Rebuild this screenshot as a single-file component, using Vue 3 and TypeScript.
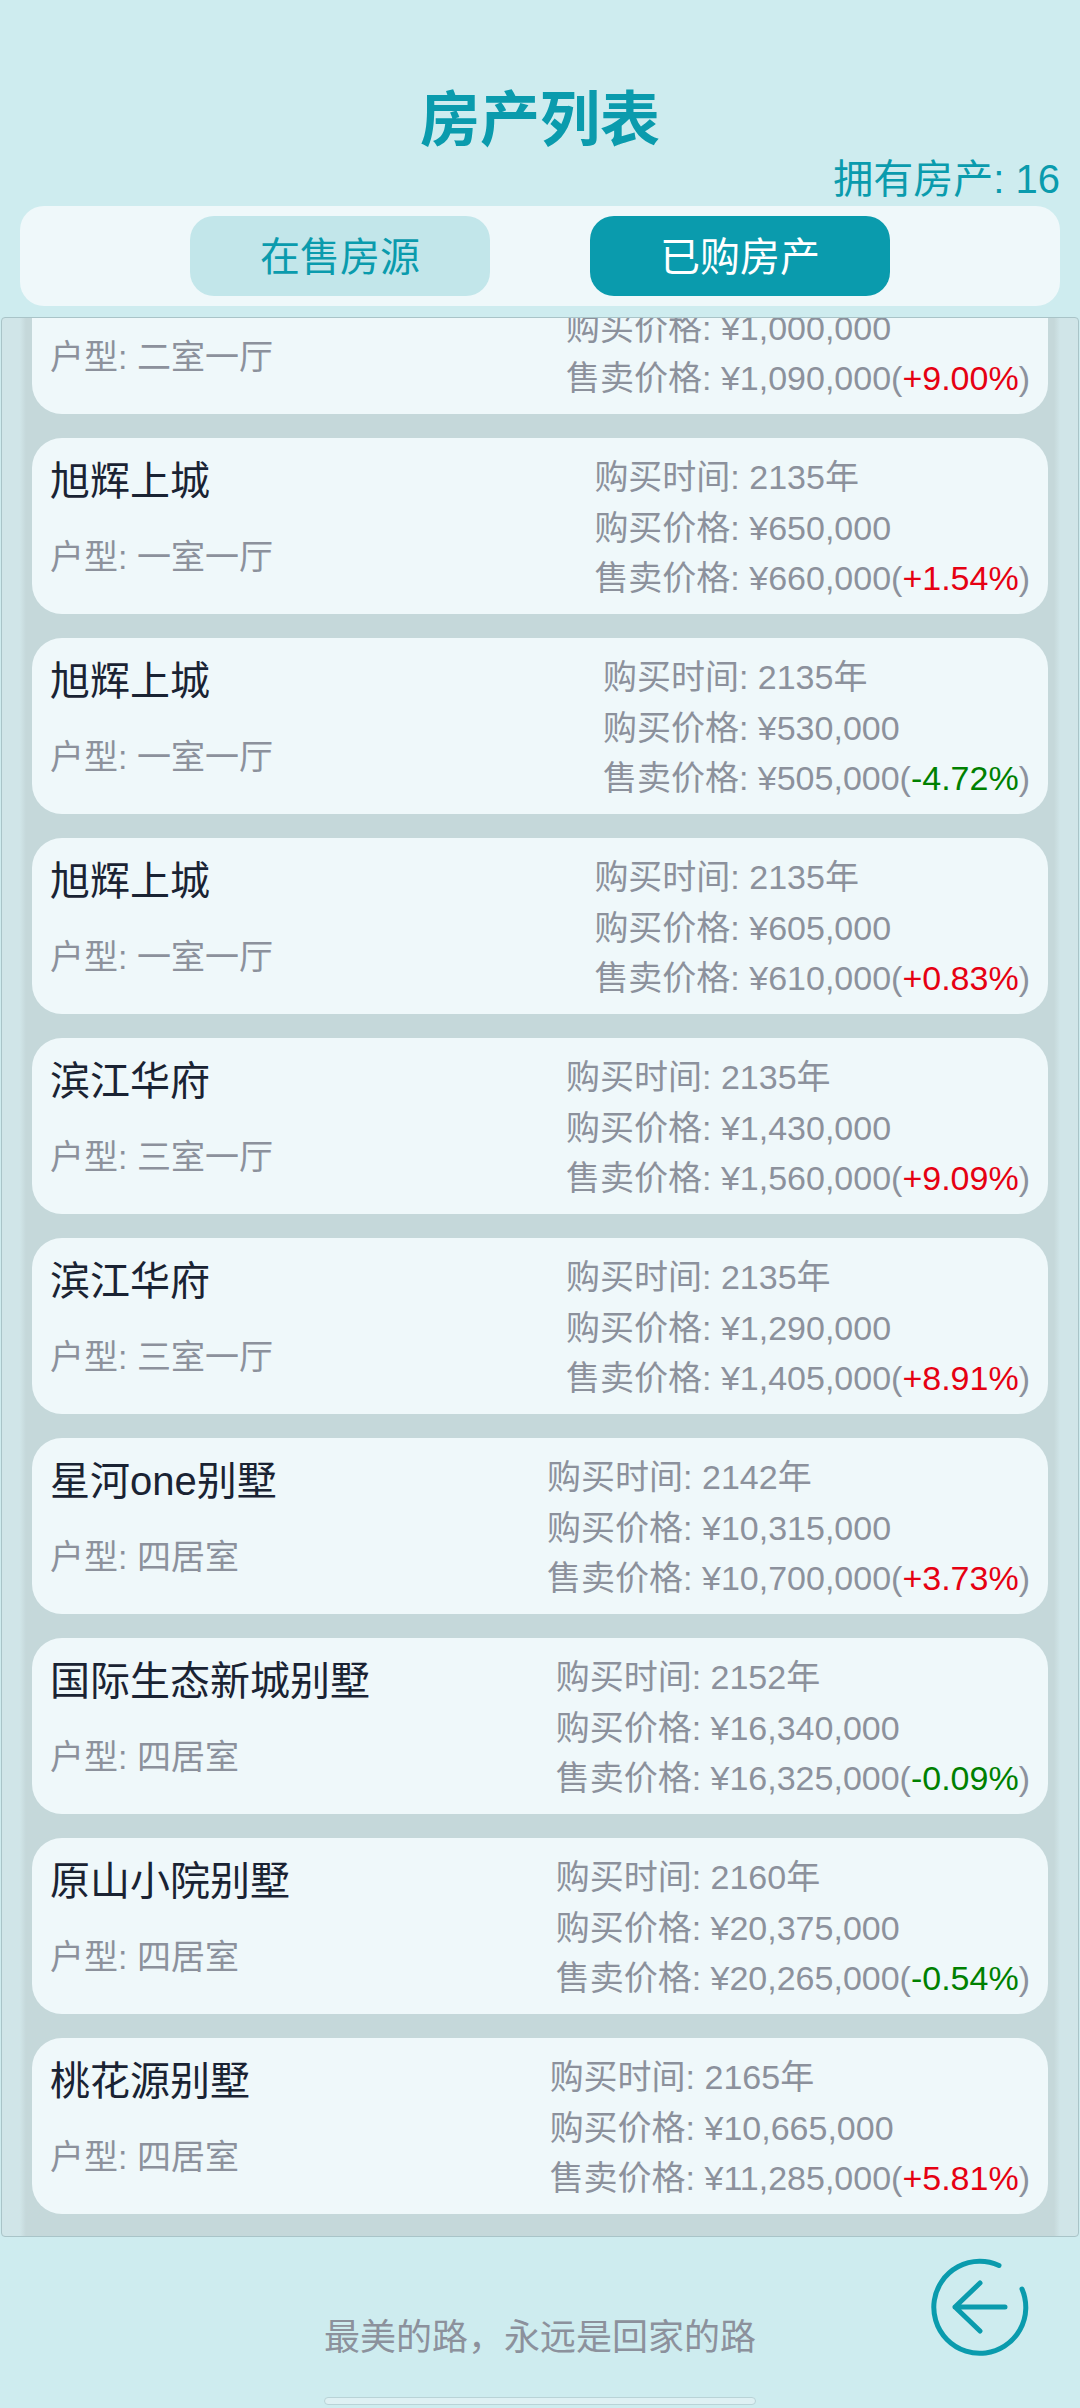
<template>
  <div class="page">
    <header class="head">
      <h1 class="title">房产列表</h1>
      <div class="count">拥有房产: {{ houses.length + 6 }}</div>
      <div class="tabs">
        <button class="tab">在售房源</button>
        <button class="tab active">已购房产</button>
      </div>
    </header>

    <div ref="listEl" class="list">
      <div v-for="(h, i) in houses" :key="i" class="card">
        <div class="left">
          <div class="name">{{ h.name }}</div>
          <div class="type">户型: {{ h.type }}</div>
        </div>
        <div class="right">
          <div>购买时间: {{ h.year }}年</div>
          <div>购买价格: ¥{{ fmt(h.buy) }}</div>
          <div>售卖价格: ¥{{ fmt(h.sell) }}(<span :class="h.rate[0] === '+' ? 'up' : 'down'">{{ h.rate }}</span>)</div>
        </div>
      </div>
    </div>

    <footer class="foot">
      <div class="slogan">最美的路，永远是回家的路</div>
      <svg class="back" viewBox="0 0 100 100" fill="none" stroke="#0a9bad" stroke-linecap="round" stroke-linejoin="round">
        <path d="M69 8.5A46 46 0 1 0 92 32" stroke-width="5" />
        <path d="M75 50H25M50 26L25 50L50 74" stroke-width="5" />
      </svg>
      <div class="indicator"></div>
    </footer>
  </div>
</template>

<script setup lang="ts">
import { onMounted, ref } from "vue";

interface House {
  name: string;
  type: string;
  year: number;
  buy: number;
  sell: number;
  rate: string;
}

const houses: House[] = [
  { name: "旭辉上城", type: "二室一厅", year: 2135, buy: 1000000, sell: 1090000, rate: "+9.00%" },
  { name: "旭辉上城", type: "一室一厅", year: 2135, buy: 650000, sell: 660000, rate: "+1.54%" },
  { name: "旭辉上城", type: "一室一厅", year: 2135, buy: 530000, sell: 505000, rate: "-4.72%" },
  { name: "旭辉上城", type: "一室一厅", year: 2135, buy: 605000, sell: 610000, rate: "+0.83%" },
  { name: "滨江华府", type: "三室一厅", year: 2135, buy: 1430000, sell: 1560000, rate: "+9.09%" },
  { name: "滨江华府", type: "三室一厅", year: 2135, buy: 1290000, sell: 1405000, rate: "+8.91%" },
  { name: "星河one别墅", type: "四居室", year: 2142, buy: 10315000, sell: 10700000, rate: "+3.73%" },
  { name: "国际生态新城别墅", type: "四居室", year: 2152, buy: 16340000, sell: 16325000, rate: "-0.09%" },
  { name: "原山小院别墅", type: "四居室", year: 2160, buy: 20375000, sell: 20265000, rate: "-0.54%" },
  { name: "桃花源别墅", type: "四居室", year: 2165, buy: 10665000, sell: 11285000, rate: "+5.81%" },
];

const fmt = (n: number) => n.toString().replace(/\B(?=(\d{3})+$)/g, ",");

const listEl = ref<HTMLElement | null>(null);
onMounted(() => {
  if (listEl.value) listEl.value.scrollTop = 105;
});
</script>

<style scoped>
.page {
  width: 1080px;
  height: 2408px;
  display: flex;
  flex-direction: column;
  background: #ceecef;
  font-family: "Liberation Sans", "Noto Sans CJK SC", sans-serif;
  overflow: hidden;
}
.head {
  padding: 87px 20px 0;
  height: 317px;
  box-sizing: border-box;
  flex: none;
}
.title {
  margin: 0;
  height: 68px;
  line-height: 68px;
  text-align: center;
  font-size: 60px;
  font-weight: 700;
  color: #0a9bad;
}
.count {
  height: 48px;
  line-height: 48px;
  margin-bottom: 3px;
  text-align: right;
  font-size: 40px;
  color: #0a9bad;
}
.tabs {
  height: 100px;
  background: #eff8fa;
  border-radius: 24px;
  display: flex;
  justify-content: center;
  align-items: center;
  gap: 100px;
}
.tab {
  width: 300px;
  height: 80px;
  padding: 0 0 5px;
  border: none;
  border-radius: 24px;
  background: #c2e6ea;
  color: #0a9bad;
  font-family: inherit;
  font-size: 40px;
}
.tab.active {
  background: #0a9bad;
  color: #fff;
}
.list {
  flex: none;
  height: 1920px;
  box-sizing: border-box;
  margin: 0 1px;
  border: 1px solid #a9c4c8;
  border-radius: 4px;
  background: linear-gradient(
    to right,
    #d0e5e8 18px,
    #c5d8da 24px,
    #c5d8da calc(100% - 24px),
    #d0e5e8 calc(100% - 18px)
  );
  padding: 24px 30px 22px;
  display: flex;
  flex-direction: column;
  gap: 24px;
  overflow: hidden;
}
.card {
  flex: none;
  height: 176px;
  box-sizing: border-box;
  padding: 0 18px;
  display: flex;
  justify-content: space-between;
  align-items: center;
  background: #eff8fa;
  border-radius: 30px;
}
.left {
  display: flex;
  flex-direction: column;
  gap: 33px;
  margin-top: -18px;
}
.name {
  font-size: 40px;
  line-height: 46px;
  color: #1a2333;
}
.type {
  font-size: 34px;
  line-height: 40px;
  color: #8c919c;
}
.right {
  margin-top: 4px;
  font-size: 34px;
  line-height: 50.5px;
  color: #8c919c;
}
.up {
  color: #e60012;
}
.down {
  color: #008000;
}
.foot {
  position: relative;
  flex: 1;
}
.slogan {
  padding-top: 76px;
  line-height: 50px;
  text-align: center;
  font-size: 36px;
  color: #8c919c;
}
.back {
  position: absolute;
  top: 20px;
  left: 930px;
  width: 100px;
  height: 100px;
}
.indicator {
  position: absolute;
  left: 324px;
  bottom: 3px;
  width: 432px;
  height: 8px;
  box-sizing: border-box;
  background: #def0f3;
  border: 1px solid #b9d3d7;
  border-radius: 4px;
}
</style>

<style>
html,
body {
  margin: 0;
}
</style>
